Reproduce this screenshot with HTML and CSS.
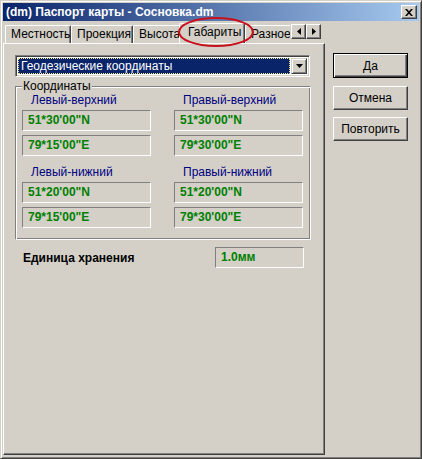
FILE: index.html
```html
<!DOCTYPE html>
<html>
<head>
<meta charset="utf-8">
<link rel="stylesheet" href="styles.css">
</head>
<body>
<div class="window">
  <div class="titlebar">
    <span class="title">(dm) Паспорт карты - Сосновка.dm</span>
    <span class="close">
      <svg width="8" height="7" viewBox="0 0 8 7"><path d="M0 0h2l2 2.2L6 0h2L5 3.5 8 7H6L4 4.8 2 7H0l3-3.5z" fill="#000"/></svg>
    </span>
  </div>
  <div class="main">
    <div class="tabcol">
      <div class="tabstrip">
        <div class="tablist">
          <div class="tab t1">Местность</div>
          <div class="tab t2">Проекция</div>
          <div class="tab t3">Высота</div>
          <div class="tab active">Габариты</div>
          <div class="tab t5">Разное</div>
        </div>
        <div class="arrows">
          <span class="arrow"><svg width="4" height="7" viewBox="0 0 4 7"><path d="M4 0v7L0 3.5z" fill="#000"/></svg></span>
          <span class="arrow"><svg width="4" height="7" viewBox="0 0 4 7"><path d="M0 0v7l4-3.5z" fill="#000"/></svg></span>
        </div>
      </div>
      <div class="panel">
        <div class="combo">
          <div class="combo-value"><span>Геодезические координаты</span></div>
          <div class="combo-btn"><svg width="7" height="4" viewBox="0 0 7 4"><path d="M0 0h7L3.5 4z" fill="#000"/></svg></div>
        </div>
        <div class="group">
          <span class="legend">Координаты</span>
          <div class="grid">
            <div class="cell">
              <div class="lbl">Левый-верхний</div>
              <div class="field">51*30'00"N</div>
              <div class="field">79*15'00"E</div>
            </div>
            <div class="cell">
              <div class="lbl">Правый-верхний</div>
              <div class="field">51*30'00"N</div>
              <div class="field">79*30'00"E</div>
            </div>
            <div class="cell">
              <div class="lbl">Левый-нижний</div>
              <div class="field">51*20'00"N</div>
              <div class="field">79*15'00"E</div>
            </div>
            <div class="cell">
              <div class="lbl">Правый-нижний</div>
              <div class="field">51*20'00"N</div>
              <div class="field">79*30'00"E</div>
            </div>
          </div>
        </div>
        <div class="unit">
          <span class="unit-lbl">Единица хранения</span>
          <div class="field unit-field">1.0мм</div>
        </div>
      </div>
    </div>
    <div class="buttons">
      <div class="btn default"><span>Да</span></div>
      <div class="btn">Отмена</div>
      <div class="btn">Повторить</div>
    </div>
  </div>
  <svg class="ring" width="78" height="32" viewBox="0 0 78 32"><ellipse cx="39" cy="16" rx="37" ry="14" fill="none" stroke="#c8101c" stroke-width="2"/></svg>
</div>
</body>
</html>
```

FILE: styles.css
```css
* { box-sizing: border-box; }
html, body { margin: 0; padding: 0; background: #d4d0c8; }
body {
  font-family: "Liberation Sans", Arial, sans-serif;
  font-size: 12px;
  color: #000;
}
.window {
  position: relative;
  width: 422px;
  height: 459px;
  background: #d4d0c8;
  border: 1px solid;
  border-color: #d4d0c8 #404040 #404040 #d4d0c8;
  box-shadow: inset 1px 1px #fff, inset -1px -1px #808080;
  padding: 2px;
  display: flex;
  flex-direction: column;
}
.titlebar {
  height: 18px;
  background: linear-gradient(to right, #0a246a, #a6caf0);
  display: flex;
  align-items: center;
  justify-content: space-between;
  padding: 0 2px 0 3px;
}
.title {
  color: #fff;
  font-weight: bold;
  font-size: 12px;
}
.close {
  width: 16px;
  height: 14px;
  background: #d4d0c8;
  border: 1px solid;
  border-color: #fff #404040 #404040 #fff;
  box-shadow: inset -1px -1px #808080;
  display: flex;
  align-items: center;
  justify-content: center;
}
.main {
  flex: 1;
  display: flex;
  margin-top: 1px;
}
.tabcol {
  width: 322px;
  display: flex;
  flex-direction: column;
}
.tabstrip {
  height: 21px;
  display: flex;
  align-items: flex-end;
  position: relative;
  z-index: 1;
}
.tablist {
  display: flex;
  align-items: flex-end;
  width: 287px;
  overflow: hidden;
  padding-left: 2px;
  height: 21px;
}
.tab {
  flex: none;
  height: 18px;
  line-height: 16px;
  padding-left: 5px;
  border: 1px solid;
  border-bottom: none;
  border-color: #fff #404040 #fff #fff;
  box-shadow: inset -1px 0 #808080;
  border-radius: 2px 2px 0 0;
}
.t1 { width: 66px; }
.t2 { width: 62px; }
.t3 { width: 48px; }
.active {
  width: 66px;
  height: 21px;
  margin: 0 -1px -1px -2px;
  padding-left: 8px;
  line-height: 17px;
  background: #d4d0c8;
  position: relative;
  z-index: 2;
}
.t5 { width: 50px; margin-left: 1px; }
.arrows {
  display: flex;
  margin-bottom: 4px;
  margin-left: 1px;
}
.arrow {
  width: 15px;
  height: 15px;
  background: #d4d0c8;
  border: 1px solid;
  border-color: #fff #404040 #404040 #fff;
  box-shadow: inset -1px -1px #808080;
  display: flex;
  align-items: center;
  justify-content: center;
}
.panel {
  flex: 1;
  border: 1px solid;
  border-color: #fff #404040 #404040 #fff;
  box-shadow: inset -1px -1px #808080;
  padding: 11px 0 0 11px;
  margin-bottom: 1px;
}
.combo {
  width: 295px;
  height: 22px;
  border: 1px solid;
  border-color: #808080 #fff #fff #808080;
  box-shadow: inset 1px 1px #404040, inset -1px -1px #d4d0c8;
  padding: 2px;
  display: flex;
  background: #fff;
}
.combo-value {
  flex: 1;
  background: #0a246a;
  color: #fff;
  border: 1px dotted #f0e08c;
  line-height: 14px;
  padding-left: 2px;
  margin-right: 1px;
}
.combo-btn {
  width: 16px;
  background: #d4d0c8;
  border: 1px solid;
  border-color: #d4d0c8 #404040 #404040 #d4d0c8;
  box-shadow: inset 1px 1px #fff, inset -1px -1px #808080;
  display: flex;
  align-items: center;
  justify-content: center;
}
.group {
  position: relative;
  width: 296px;
  margin-top: 9px;
  border: 1px solid;
  border-color: #808080 #fff #fff #808080;
  box-shadow: inset 1px 1px #fff, inset -1px -1px #808080;
  padding: 6px 0 11px 6px;
}
.legend {
  position: absolute;
  left: 6px;
  top: -8px;
  padding: 0 1px;
  background: #d4d0c8;
  line-height: 14px;
}
.grid {
  display: grid;
  grid-template-columns: 129px 129px;
  column-gap: 23px;
  row-gap: 9px;
}
.cell {
  display: flex;
  flex-direction: column;
  gap: 3px;
}
.lbl {
  color: #000080;
  line-height: 14px;
  padding-left: 9px;
}
.field {
  height: 21px;
  border: 1px solid;
  border-color: #808080 #fff #fff #808080;
  color: #008000;
  font-weight: bold;
  font-size: 12px;
  line-height: 19px;
  padding-left: 5px;
}
.cell .field + .field { margin-top: 1px; }
.unit {
  display: flex;
  align-items: center;
  width: 281px;
  margin: 7px 0 0 8px;
  justify-content: space-between;
}
.unit-lbl { font-weight: bold; }
.unit-field {
  width: 89px;
  height: 21px;
}
.buttons {
  display: flex;
  flex-direction: column;
  margin: 31px 0 0 8px;
  gap: 7px;
}
.btn {
  width: 75px;
  height: 24px;
  border: 1px solid;
  border-color: #fff #404040 #404040 #fff;
  box-shadow: inset -1px -1px #808080;
  display: flex;
  align-items: center;
  justify-content: center;
}
.btn.default {
  height: 25px;
  border: 1px solid #000;
  box-shadow: inset 1px 1px #fff, inset -1px -1px #404040, inset -2px -2px #808080;
  margin-bottom: 1px;
}
.ring {
  position: absolute;
  left: 176px;
  top: 15px;
  z-index: 5;
}
```
